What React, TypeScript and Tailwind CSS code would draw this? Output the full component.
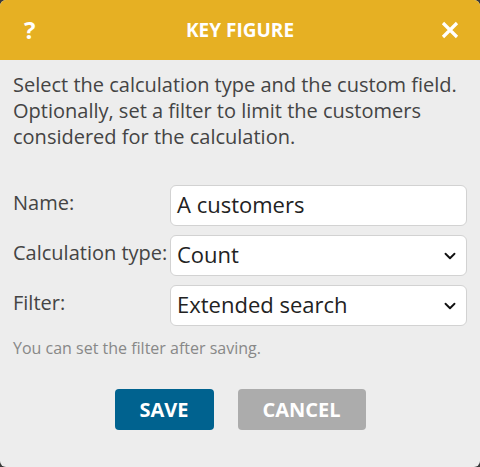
import { ChevronDown } from 'lucide-react';

const font = { fontFamily: '"Open Sans", "Noto Sans", sans-serif' };

function Field({ label, children }: { label: string; children: React.ReactNode }) {
  return (
    <div className="flex items-start">
      <label className="w-[157px] shrink-0 pt-[5px] text-[20px] leading-[26px] text-[#444]">{label}</label>
      <div className="flex-1">{children}</div>
    </div>
  );
}

function Select({ value }: { value: string }) {
  return (
    <div className="relative">
      <div className="h-[41px] w-full rounded-[6px] border border-[#d2d2d2] bg-white pl-[6px] pr-8 text-[22px] leading-[37px] text-[#222]">
        {value}
      </div>
      <ChevronDown className="pointer-events-none absolute right-[8px] top-1/2 -translate-y-1/2 text-[#111]" size={18} strokeWidth={2.5} />
    </div>
  );
}

export default function App() {
  return (
    <div className="h-[467px] w-[480px] bg-[#3a3a3a]" style={font}>
      <div className="flex h-full flex-col overflow-hidden rounded-[6px] bg-[#ededed]">
        {/* Kopfzeile */}
        <div className="flex h-[60px] shrink-0 items-center justify-between bg-[#e6b023] pl-[24px] pr-[22px] text-white">
          <span className="w-[20px] text-[24px] font-bold">?</span>
          <h1 className="-ml-[4px] text-[19px] font-bold">KEY FIGURE</h1>
          <svg width="20" height="20" viewBox="0 0 20 20" className="-mr-[2px]">
            <path d="M3 3 L17 17 M17 3 L3 17" stroke="white" strokeWidth="3.2" strokeLinecap="butt" />
          </svg>
        </div>

        <div className="flex flex-1 flex-col px-[13px]">
          <p className="pt-[12px] text-[20px] leading-[26px] text-[#444]">
            Select the calculation type and the custom field. Optionally, set a filter to limit the customers considered
            for the calculation.
          </p>

          <div className="mt-[35px] flex flex-col gap-[9px]">
            <Field label="Name:">
              <div className="h-[41px] w-full rounded-[6px] border border-[#d2d2d2] bg-white pl-[6px] text-[22px] leading-[37px] text-[#222]">
                A customers
              </div>
            </Field>
            <Field label="Calculation type:">
              <Select value="Count" />
            </Field>
            <Field label="Filter:">
              <Select value="Extended search" />
            </Field>
          </div>

          <p className="mt-[11px] text-[16px] leading-[22px] text-[#888]">You can set the filter after saving.</p>

          <div className="mt-[30px] flex justify-center gap-[24px]">
            <button className="h-[41px] w-[99px] rounded-[4px] bg-[#00628f] text-[20px] font-bold text-white">SAVE</button>
            <button className="h-[41px] w-[128px] rounded-[4px] bg-[#acacac] text-[20px] font-bold text-white">CANCEL</button>
          </div>
        </div>
      </div>
    </div>
  );
}
